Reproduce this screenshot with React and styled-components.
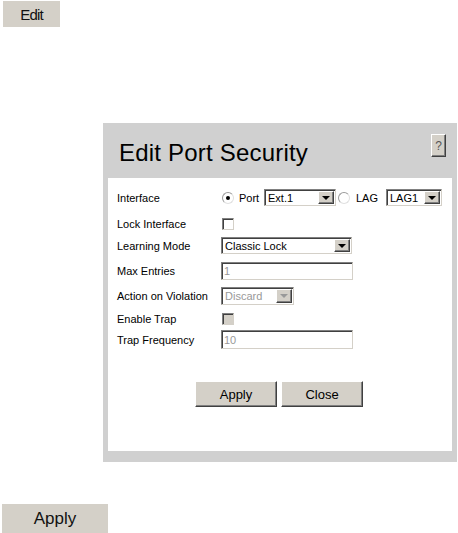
import React from "react";
import styled, { createGlobalStyle, css } from "styled-components";

const Global = createGlobalStyle`
  html, body { margin: 0; padding: 0; background: #fff; }
  body { font-family: "Liberation Sans", Arial, sans-serif; color: #000; }
`;

const Page = styled.div`
  display: flex;
  flex-direction: column;
  align-items: flex-start;
  width: 458px;
  height: 533px;
  overflow: hidden;
`;

const FlatButton = styled.div`
  display: flex;
  align-items: center;
  justify-content: center;
  background: #d4d0c8;
  font-size: ${(p) => p.$fs}px;
  letter-spacing: ${(p) => p.$ls || 0}px;
  color: #111;
  width: ${(p) => p.$w}px;
  height: ${(p) => p.$h}px;
  margin-left: ${(p) => p.$ml}px;
  margin-top: ${(p) => p.$mt}px;
  box-sizing: border-box;
`;

const Panel = styled.div`
  margin-left: 103px;
  margin-top: 96px;
  width: 354px;
  height: 339px;
  background: #d0d0d0;
  box-sizing: border-box;
  padding: 0 5px 11px 5px;
  display: flex;
  flex-direction: column;
`;

const Header = styled.div`
  height: 55px;
  display: flex;
  align-items: flex-start;
  justify-content: space-between;
  box-sizing: border-box;
  padding: 16px 6px 0 11px;
`;

const Title = styled.div`
  font-size: 24px;
  line-height: 28px;
  letter-spacing: 0.2px;
`;

const bevel = css`
  border-top: 1px solid #fff;
  border-left: 1px solid #fff;
  border-right: 1px solid #404040;
  border-bottom: 1px solid #404040;
  box-shadow: inset -1px -1px 0 #808080;
`;

const HelpButton = styled.div`
  ${bevel};
  width: 15px;
  height: 23px;
  margin-top: -5px;
  box-sizing: border-box;
  background: #d4d0c8;
  color: #555;
  font-size: 12px;
  display: flex;
  align-items: center;
  justify-content: center;
`;

const Body = styled.div`
  flex: 1;
  background: #fff;
  display: flex;
  flex-direction: column;
  padding-top: 11px;
  box-sizing: border-box;
`;

const Row = styled.div`
  display: flex;
  align-items: center;
  height: ${(p) => p.$h}px;
  margin-top: ${(p) => p.$mt || 0}px;
`;

const Label = styled.div`
  width: 104px;
  padding-left: 9px;
  font-size: 11px;
  white-space: nowrap;
  flex-shrink: 0;
`;

const Controls = styled.div`
  display: flex;
  align-items: center;
  height: 100%;
`;

const inset = css`
  border-top: 1px solid #808080;
  border-left: 1px solid #808080;
  border-right: 1px solid #d4d0c8;
  border-bottom: 1px solid #d4d0c8;
  box-shadow: inset 1px 1px 0 #404040;
`;

const SelectBox = styled.div`
  ${inset};
  box-sizing: border-box;
  width: ${(p) => p.$w}px;
  height: ${(p) => p.$h || 17}px;
  margin-left: ${(p) => p.$ml || 0}px;
  background: #fff;
  display: flex;
  align-items: stretch;
  font-size: 11px;
  color: ${(p) => (p.$disabled ? "#999" : "#000")};
`;

const SelectText = styled.div`
  flex: 1;
  padding-left: 3px;
  display: flex;
  align-items: center;
  white-space: nowrap;
  overflow: hidden;
`;

const Arrow = styled.div`
  ${bevel};
  width: 16px;
  box-sizing: border-box;
  margin: 1px 1px 1px 0;
  background: #d4d0c8;
  display: flex;
  align-items: center;
  justify-content: center;
  &::after {
    content: "";
    border-left: 4px solid transparent;
    border-right: 4px solid transparent;
    border-top: 4px solid ${(p) => (p.$disabled ? "#999" : "#000")};
  }
`;

const TextBox = styled.div`
  ${inset};
  box-sizing: border-box;
  width: ${(p) => p.$w}px;
  height: ${(p) => p.$h}px;
  background: #fff;
  color: #999;
  font-size: 11px;
  display: flex;
  align-items: center;
  padding-left: 2px;
`;

const Check = styled.div`
  ${inset};
  box-sizing: border-box;
  width: 12px;
  height: 12px;
  margin-left: 1px;
  background: ${(p) => (p.$disabled ? "#d4d0c8" : "#fff")};
`;

const Radio = styled.div`
  width: 12px;
  height: 12px;
  border-radius: 50%;
  box-sizing: border-box;
  border: 1px solid #9a9a9a;
  border-right-color: #e0e0e0;
  border-bottom-color: #e0e0e0;
  margin-left: ${(p) => p.$ml || 0}px;
  background: #fff;
  display: flex;
  align-items: center;
  justify-content: center;
  &::after {
    content: "";
    display: ${(p) => (p.$checked ? "block" : "none")};
    width: 4px;
    height: 4px;
    border-radius: 50%;
    background: #000;
  }
`;

const RadioLabel = styled.span`
  font-size: 11px;
  margin-left: ${(p) => p.$ml}px;
  width: ${(p) => p.$w}px;
`;

const ButtonRow = styled.div`
  display: flex;
  justify-content: center;
  gap: 4px;
  margin-top: 32px;
  padding-right: 2px;
`;

const PushButton = styled.div`
  ${bevel};
  width: 82px;
  height: 26px;
  box-sizing: border-box;
  background: #d4d0c8;
  font-size: 13px;
  display: flex;
  align-items: center;
  justify-content: center;
`;

export default function App() {
  return (
    <Page>
      <Global />
      <FlatButton $w={57} $h={26} $ml={3} $mt={1} $fs={15} $ls={-0.8}>Edit</FlatButton>
      <Panel>
        <Header>
          <Title>Edit Port Security</Title>
          <HelpButton>?</HelpButton>
        </Header>
        <Body>
          <Row $h={17}>
            <Label>Interface</Label>
            <Controls>
              <Radio $checked $ml={1} />
              <RadioLabel $ml={5} $w={25}>Port</RadioLabel>
              <SelectBox $w={72}>
                <SelectText>Ext.1</SelectText>
                <Arrow />
              </SelectBox>
              <Radio $ml={2} />
              <RadioLabel $ml={6} $w={30}>LAG</RadioLabel>
              <SelectBox $w={56}>
                <SelectText>LAG1</SelectText>
                <Arrow />
              </SelectBox>
            </Controls>
          </Row>
          <Row $h={12} $mt={12}>
            <Label>Lock Interface</Label>
            <Controls>
              <Check />
            </Controls>
          </Row>
          <Row $h={17} $mt={7}>
            <Label>Learning Mode</Label>
            <Controls>
              <SelectBox $w={131}>
                <SelectText>Classic Lock</SelectText>
                <Arrow />
              </SelectBox>
            </Controls>
          </Row>
          <Row $h={18} $mt={8}>
            <Label>Max Entries</Label>
            <Controls>
              <TextBox $w={132} $h={18}>1</TextBox>
            </Controls>
          </Row>
          <Row $h={18} $mt={7}>
            <Label>Action on Violation</Label>
            <Controls>
              <SelectBox $w={73} $h={18} $disabled>
                <SelectText>Discard</SelectText>
                <Arrow $disabled />
              </SelectBox>
            </Controls>
          </Row>
          <Row $h={12} $mt={8}>
            <Label>Enable Trap</Label>
            <Controls>
              <Check $disabled />
            </Controls>
          </Row>
          <Row $h={19} $mt={5}>
            <Label>Trap Frequency</Label>
            <Controls>
              <TextBox $w={132} $h={19}>10</TextBox>
            </Controls>
          </Row>
          <ButtonRow>
            <PushButton>Apply</PushButton>
            <PushButton>Close</PushButton>
          </ButtonRow>
        </Body>
      </Panel>
      <FlatButton $w={106} $h={29} $ml={2} $mt={42} $fs={17}>Apply</FlatButton>
    </Page>
  );
}
